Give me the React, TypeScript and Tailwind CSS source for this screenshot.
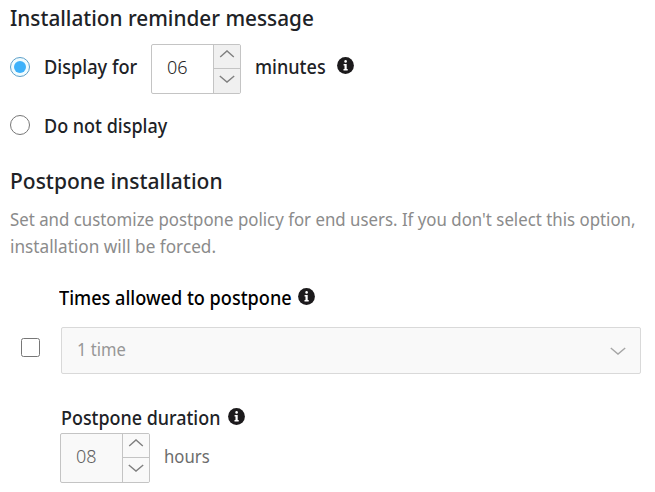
function Info({ className }: { className: string }) {
  return (
    <svg className={`h-[17px] w-[17px] shrink-0 ${className}`} viewBox="0 0 17 17">
      <circle cx="8.5" cy="8.5" r="8.4" fill="#1c1a1c" />
      <circle cx="8.6" cy="4.4" r="1.3" fill="#fff" />
      <path d="M6.6 7.1H9.7V12H10.7V13.4H6.5V12H7.5V8.4H6.6Z" fill="#fff" />
    </svg>
  );
}

function Chevron({ up, color }: { up?: boolean; color: string }) {
  return (
    <svg className="h-[8px] w-[16px]" viewBox="0 0 16 8" fill="none" stroke={color} strokeWidth="1.4">
      {up ? <path d="M1.2 7 8 .9l6.8 6.1" /> : <path d="M.8 1 8 7.1l7.2-6.1" />}
    </svg>
  );
}

function Stepper({ value, muted }: { value: string; muted?: boolean }) {
  return (
    <div className={`flex h-[50px] w-[90px] shrink-0 overflow-hidden rounded-[2px] border border-[#c4c4c4] ${muted ? "bg-[#f9f9f9]" : "bg-white"}`}>
      <div className={`flex w-[61px] items-center pb-[4px] pl-[15px] text-[18px] leading-none ${muted ? "text-[#606060]" : "text-[#252525]"}`}>
        <span className="font-light">{value}</span>
      </div>
      <div className={`flex w-[27px] flex-col border-l border-[#c4c4c4] ${muted ? "bg-[#f9f9f9]" : "bg-[#f0f0f0]"}`}>
        <div className="flex h-[24px] items-start justify-center border-b border-[#c4c4c4] pt-[5px]">
          <Chevron up color="#808080" />
        </div>
        <div className="flex h-[24px] items-start justify-center pt-[6px]">
          <Chevron color="#808080" />
        </div>
      </div>
    </div>
  );
}

export default function App() {
  return (
    <main className="h-[492px] w-[655px] overflow-hidden bg-white pl-[10px] font-['Noto_Sans',sans-serif] whitespace-nowrap text-[#202226]">
      <h2 className="flex h-[38px] items-center text-[21px] font-medium">
        <span className="inline-block origin-left scale-x-[0.988]">Installation reminder message</span>
      </h2>
      <div className="mt-[6px] flex h-[50px] items-center text-[19px] font-medium">
        <span className="mb-[4px] flex h-[20px] w-[20px] items-center justify-center rounded-full border border-[#5d9fc9] bg-[#f0fcff]">
          <span className="h-[12px] w-[12px] rounded-full bg-[#3db1fa]" />
        </span>
        <span className="mb-[4px] ml-[14px] w-[107px]"><span className="inline-block origin-left scale-x-[0.957]">Display for</span></span>
        <Stepper value="06" />
        <span className="mb-[4px] ml-[14px] w-[82px]"><span className="inline-block origin-left scale-x-[0.95]">minutes</span></span>
        <Info className="mb-[7px]" />
      </div>
      <div className="mt-[18px] flex h-[28px] items-center text-[19px] font-medium">
        <span className="mb-[3px] h-[20px] w-[20px] rounded-full border border-[#777] bg-white" />
        <span className="ml-[14px] inline-block origin-left scale-x-[0.947]">Do not display</span>
      </div>
      <h2 className="mt-[26px] flex h-[32px] items-center text-[21px] font-medium">
        <span className="inline-block origin-left">Postpone installation</span>
      </h2>
      <p className="mt-[8px] text-[18px] leading-[27px] font-normal text-[#8b8b8b]">
        <span className="block w-fit origin-left scale-x-[0.935]">Set and customize postpone policy for end users. If you don't select this option,</span>
        <span className="block w-fit origin-left scale-x-[0.955]">installation will be forced.</span>
      </p>
      <div className="mt-[24px] ml-[49px] flex h-[28px] items-center text-[19px] font-medium text-black">
        <span className="w-[239px]"><span className="inline-block origin-left scale-x-[0.953]">Times allowed to postpone</span></span>
        <Info className="mb-[4px]" />
      </div>
      <div className="mt-[15px] ml-[11px] flex h-[47px] items-center">
        <span className="mb-[7px] h-[19px] w-[19px] rounded-[2.5px] border border-[#777] bg-white" />
        <div className="ml-[21px] flex h-[47px] w-[580px] items-center justify-between rounded-[2px] border border-[#d9d9d9] bg-[#f9f9f9] pr-[14px] pl-[15px] text-[18px] font-normal text-[#969696]">
          <span className="mb-[2px] inline-block origin-left scale-x-[0.92]">1 time</span>
          <Chevron color="#a6a6a6" />
        </div>
      </div>
      <div className="mt-[30px] ml-[51px] flex h-[28px] items-center text-[19px] font-medium">
        <span className="w-[167px]"><span className="inline-block origin-left scale-x-[0.943]">Postpone duration</span></span>
        <Info className="mb-[3px]" />
      </div>
      <div className="mt-px ml-[50px] flex h-[50px] items-center">
        <Stepper value="08" muted />
        <span className="mb-[4px] ml-[14px] text-[18px] font-normal text-[#6c6c6c]"><span className="inline-block origin-left scale-x-[0.93]">hours</span></span>
      </div>
    </main>
  );
}
